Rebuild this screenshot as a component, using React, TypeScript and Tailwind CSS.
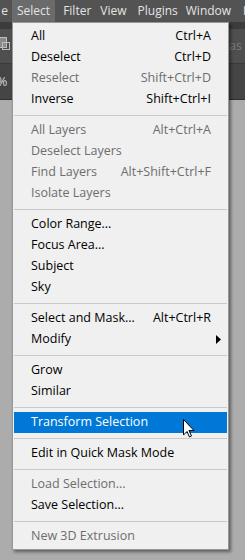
import React from "react";

type Row =
  | { sep: true }
  | { label: string; key?: string; off?: boolean; sub?: boolean; hot?: boolean };

const rows: Row[] = [
  { label: "All", key: "Ctrl+A" },
  { label: "Deselect", key: "Ctrl+D" },
  { label: "Reselect", key: "Shift+Ctrl+D", off: true },
  { label: "Inverse", key: "Shift+Ctrl+I" },
  { sep: true },
  { label: "All Layers", key: "Alt+Ctrl+A", off: true },
  { label: "Deselect Layers", off: true },
  { label: "Find Layers", key: "Alt+Shift+Ctrl+F", off: true },
  { label: "Isolate Layers", off: true },
  { sep: true },
  { label: "Color Range..." },
  { label: "Focus Area..." },
  { label: "Subject" },
  { label: "Sky" },
  { sep: true },
  { label: "Select and Mask...", key: "Alt+Ctrl+R" },
  { label: "Modify", sub: true },
  { sep: true },
  { label: "Grow" },
  { label: "Similar" },
  { sep: true },
  { label: "Transform Selection", hot: true },
  { sep: true },
  { label: "Edit in Quick Mask Mode" },
  { sep: true },
  { label: "Load Selection...", off: true },
  { label: "Save Selection..." },
  { sep: true },
  { label: "New 3D Extrusion", off: true },
];

function MenuRow({ r }: { r: Row }) {
  if ("sep" in r) {
    return (
      <div className="h-[10px] flex items-center">
        <div className="h-px w-full bg-[#c9c9c9]" />
      </div>
    );
  }
  const color = r.hot ? "text-white" : r.off ? "text-[#6d6d6d]" : "text-black";
  return (
    <div
      className={`h-[21px] flex items-center justify-between pl-[17px] pr-[16px] ${
        r.hot ? "bg-[#0078d7]" : ""
      } ${color}`}
    >
      <span>{r.label}</span>
      {r.key && <span>{r.key}</span>}
      {r.sub && (
        <svg width="5" height="9" viewBox="0 0 5 9" className="mr-[-10px]">
          <polygon points="0,0 5,4.5 0,9" fill="#000" />
        </svg>
      )}
    </div>
  );
}

export default function App() {
  return (
    <div
      className="w-[245px] h-[560px] bg-[#acacac] relative overflow-hidden text-[12.5px] leading-none"
      style={{ fontFamily: '"Open Sans", "Noto Sans", sans-serif' }}
    >
      {/* menu bar */}
      <div className="h-[22px] bg-[#535353] flex items-center text-[12px] text-[#e4e4e4] whitespace-nowrap">
        <div className="w-[12px] shrink-0 overflow-hidden flex justify-end pr-[4px]">
          <span>e</span>
        </div>
        <span className="shrink-0 h-full flex items-center px-[5px] bg-[#6b6b6b]">Select</span>
        <span className="shrink-0 ml-[8px]">Filter</span>
        <span className="shrink-0 ml-[9px]">View</span>
        <span className="shrink-0 ml-[11px]">Plugins</span>
        <span className="shrink-0 ml-[8px]">Window</span>
        <span className="shrink-0 ml-[12px]">H</span>
      </div>

      {/* background panels */}
      <div className="h-[7px] bg-[#3c3c3c]" />
      <div className="h-[35px] bg-[#4f4f4f] border-b border-[#3a3a3a] relative">
        <div className="absolute left-[-4px] top-[8px] w-[11px] h-[11px] border border-[#bdbdbd] bg-[#8a8a8a]" />
        <div className="absolute left-[2px] top-[13px] w-[8px] h-[8px] border border-[#bdbdbd]" />
        <span className="absolute left-[229px] top-[11px] text-[#7b7b7b]">as</span>
      </div>
      <div className="h-[36px] bg-[#454545] border-b border-[#303030] relative">
        <span className="absolute left-[-3px] top-[12px] text-[#d8d8d8]">%</span>
      </div>
      <div className="h-[458px]" />

      {/* dropdown */}
      <div className="absolute left-[12px] top-[22px] w-[217px] bg-[#f0f0f0] border border-[#979797] pt-[3px] pb-[2px] px-[1px] shadow-[2px_2px_3px_rgba(0,0,0,0.45)] whitespace-nowrap">
        {rows.map((r, i) => (
          <MenuRow key={i} r={r} />
        ))}
      </div>

      {/* pointer */}
      <svg className="absolute left-[183px] top-[419px]" width="12" height="19" viewBox="0 0 12 19">
        <path
          d="M0.5 0.5 L0.5 16 L4 12.5 L6.5 18 L8.5 17 L6 11.5 L11 11.5 Z"
          fill="#fff"
          stroke="#000"
          strokeWidth="1"
          strokeLinejoin="miter"
        />
      </svg>
    </div>
  );
}
